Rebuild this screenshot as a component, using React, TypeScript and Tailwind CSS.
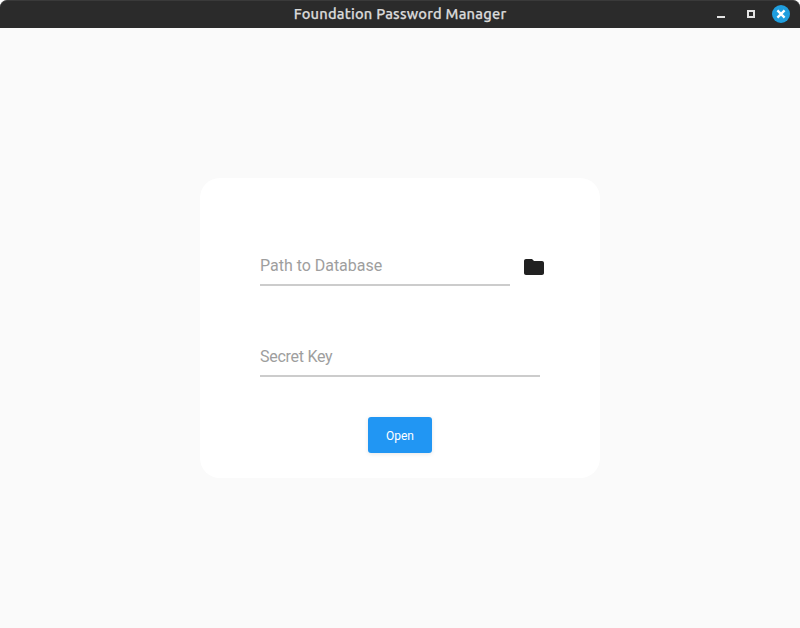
import React from "react";

function TitleBar() {
  return (
    <header className="grid h-7 grid-cols-[1fr_auto_1fr] items-center rounded-t-[7px] border-t border-[#3a3a3a] bg-[#2b2b2b] pb-[2px]">
      <div />
      <h1 className="w-[214px] text-center whitespace-nowrap font-['Ubuntu','Noto_Sans',sans-serif] text-[14.67px] leading-[25px] font-medium tracking-[0.21px] text-[#dadada] [-webkit-text-stroke:0.25px_#dadada]">
        Foundation Password Manager
      </h1>
      <div className="flex items-center justify-end gap-[12px] pr-[10px]">
        <button aria-label="Minimize" className="h-[18px] w-[18px]">
          <svg width="18" height="18" viewBox="0 0 18 18" className="block">
            <rect x="5" y="11" width="8" height="2" fill="#e4e4e4" />
          </svg>
        </button>
        <button aria-label="Maximize" className="h-[18px] w-[18px]">
          <svg width="18" height="18" viewBox="0 0 18 18" className="block">
            <rect x="6" y="6" width="6" height="6" fill="none" stroke="#e4e4e4" strokeWidth="2" />
          </svg>
        </button>
        <button aria-label="Close" className="h-[18px] w-[18px]">
          <svg width="18" height="18" viewBox="0 0 18 18" className="block">
            <circle cx="9" cy="9" r="9" fill="#1f9ede" />
            <path d="M5.4 5.4l7.2 7.2M12.6 5.4l-7.2 7.2" stroke="#fff" strokeWidth="2.3" />
          </svg>
        </button>
      </div>
    </header>
  );
}

function Field({ label, className }: { label: string; className: string }) {
  return (
    <input
      aria-label={label}
      placeholder={label}
      className={`block h-[41px] border-b-2 border-[#cccccc] bg-transparent p-0 pt-[2px] text-[16px] leading-6 text-[#212121] outline-none placeholder:text-[#9e9e9e] ${className}`}
    />
  );
}

export default function App() {
  return (
    <div className="flex h-[628px] w-[800px] flex-col overflow-hidden bg-white font-[Roboto,sans-serif]">
      <TitleBar />
      <main className="flex flex-1 items-center justify-center bg-[#fafafa]">
        <form className="flex h-[300px] w-[400px] flex-col rounded-[20px] bg-white px-[60px] pt-[67px]">
          <div className="flex items-start">
            <Field label="Path to Database" className="w-[250px] shrink-0 tracking-[-0.02px]" />
            <button type="button" aria-label="Browse" className="mt-[10px] ml-[12px] shrink-0">
              <svg width="24" height="24" viewBox="0 0 24 24" fill="#212121" className="block">
                <path d="M10 4H4c-1.1 0-1.99.9-1.99 2L2 18c0 1.1.9 2 2 2h16c1.1 0 2-.9 2-2V8c0-1.1-.9-2-2-2h-8l-2-2z" />
              </svg>
            </button>
          </div>
          <Field label="Secret Key" className="mt-[50px] w-[280px] tracking-[-0.27px]" />
          <button
            type="button"
            className="mt-[40px] h-9 w-16 self-center rounded-[3px] bg-[#2196f3] pt-[2px] text-[12px] text-white shadow-[0_1px_4px_rgba(0,0,0,0.1)]"
          >
            Open
          </button>
        </form>
      </main>
    </div>
  );
}
